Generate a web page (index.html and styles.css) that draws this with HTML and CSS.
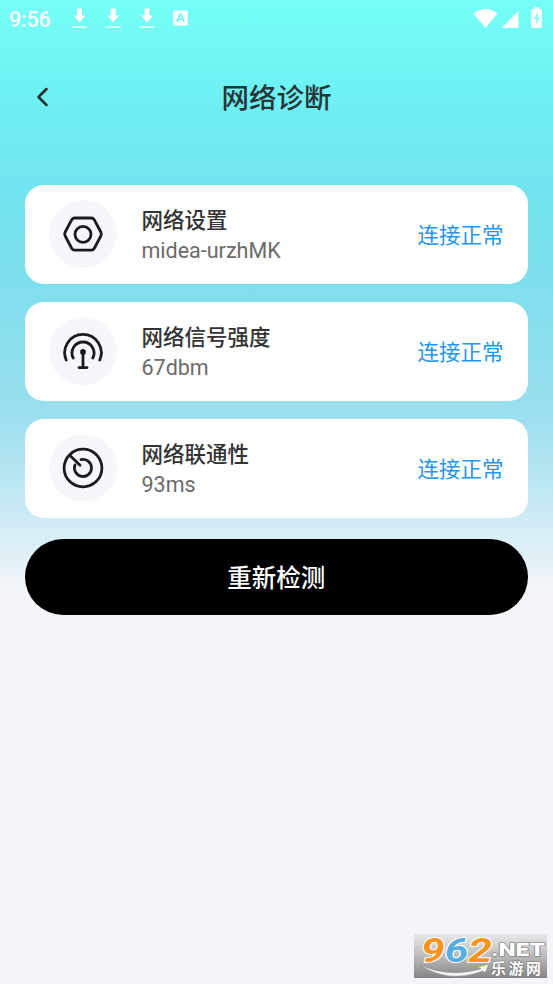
FILE: index.html
```html
<!DOCTYPE html>
<html lang="zh-CN">
<head>
<meta charset="utf-8">
<title>网络诊断</title>
<link rel="stylesheet" href="styles.css">
</head>
<body>
<div class="screen">
  <header class="status">
    <span class="time">9:56</span>
    <svg class="notices" width="120" height="24" viewBox="0 0 120 24" fill="#fff">
      <g id="dl"><path d="M7 1.500h5v7h3.500L9.500 15.500 3.500 8.500H7z"/><path opacity=".75" d="M2 19.300h15v1.800H2z"/></g>
      <use href="#dl" x="33.700"/><use href="#dl" x="67.500"/>
      <path fill-rule="evenodd" d="M104.500 3.500h12q1.200 0 1.200 1.200V17.300q0 1.200-1.200 1.200h-12q-1.200 0-1.200-1.200V4.700q0-1.200 1.200-1.200zM109.500 6l-3.500 9h2l.7-2h3.600l.7 2h2l-3.500-9zM110.500 8.300l1.200 3.100h-2.400z"/>
    </svg>
    <svg class="signals" width="73" height="24" viewBox="0 0 73 24" fill="#fff">
      <path d="M.5 7.500Q12.500-1.700 24.500 7.500L12.500 22z"/><path d="M45.500 5v17H28.500z"/>
      <path fill-rule="evenodd" d="M59.500 3h2V1.200h4.500V3h1.300q1.500 0 1.500 1.500v16q0 1.500-1.500 1.500h-7.600q-1.500 0-1.500-1.500v-16Q58.200 3 59.500 3zM65 6l-4 7h2.300v5.500l3.500-7.200h-2.200z"/>
    </svg>
  </header>
  <nav class="nav">
    <svg class="back" width="16" height="22" viewBox="0 0 16 22"><path d="M12.500 3 4.500 11l8 8"/></svg>
    <h1>网络诊断</h1>
  </nav>
  <main>
    <section class="card">
      <div class="icon"><svg viewBox="0 0 44 44"><path d="M13.800 6h16.400q2 0 3 1.700l6.600 12.300q1 2 0 4L33.200 36.500q-1 1.700-3 1.700H13.800q-2 0-3-1.700L4.200 24q-1-2 0-4L10.800 7.700q1-1.700 3-1.700z"/><circle cx="22" cy="22.300" r="8"/></svg></div>
      <div class="info"><h2>网络设置</h2><p>midea-urzhMK</p></div>
      <span class="state">连接正常</span>
    </section>
    <section class="card">
      <div class="icon"><svg viewBox="0 0 44 44"><path d="M5.200 31A18.300 18.300 0 1 1 38.800 31M12.200 29A11 11 0 1 1 31.800 29M22 23.500V38.300M18 38.600h8"/><circle cx="22" cy="23" r="2.900" class="dot"/></svg></div>
      <div class="info"><h2>网络信号强度</h2><p>67dbm</p></div>
      <span class="state">连接正常</span>
    </section>
    <section class="card">
      <div class="icon"><svg viewBox="0 0 44 44"><circle cx="22" cy="22" r="18.900"/><path d="M9 9.500 19 19.300M20 13.700A8.500 8.500 0 1 1 14 19"/></svg></div>
      <div class="info"><h2>网络联通性</h2><p>93ms</p></div>
      <span class="state">连接正常</span>
    </section>
    <button class="retry">重新检测</button>
  </main>
  <svg class="mark" width="133" height="44" viewBox="0 0 133 44">
    <defs><linearGradient id="g" x1="0" y1="0" x2="0" y2="1"><stop offset="0" stop-color="#e8e8e8"/><stop offset=".5" stop-color="#bbb"/><stop offset="1" stop-color="#858585"/></linearGradient></defs>
    <rect width="133" height="44" fill="url(#g)"/>
    <path class="swoosh" d="M6 31Q34 44 67 35l-3-2 11-3-4 9-2-2Q34 50 6 31z"/>
    <text class="num" x="7" y="27.500" textLength="71" lengthAdjust="spacingAndGlyphs"><tspan fill="#f79422">9</tspan><tspan fill="#56aee0">6</tspan><tspan fill="#f79422">2</tspan></text>
    <text class="net" x="77" y="21.500" textLength="54" lengthAdjust="spacingAndGlyphs">.NET</text>
    <text class="site" x="77" y="39.500" textLength="50">乐游网</text>
  </svg>
</div>
</body>
</html>
```

FILE: styles.css
```css
* { box-sizing: border-box; }
body { margin: 0; font-family: Roboto, "Noto Sans CJK SC", sans-serif; }
h1, h2, p { margin: 0; }
svg { display: block; }
.screen {
  position: relative;
  height: 984px;
  overflow: hidden;
  background: linear-gradient(#76fff8 0, #6ef1f3 90px, #72e5f0 190px, #80dfee 290px, #9adfef 410px, #bce7f3 485px, #d7eef5 535px, #f4f5f8 592px);
}
.status { height: 38px; padding: 0 10px 0 9px; display: flex; align-items: center; color: #f5ffff; }
.time { width: 42px; font-size: 21.500px; line-height: 24px; padding-top: 2px; font-weight: 500; letter-spacing: -.2px; }
.notices { margin: 0 0 1px 19px; }
.signals { margin: 0 -3px 2px auto; }
.nav { height: 118px; display: grid; grid-template-columns: 1fr auto 1fr; align-items: center; }
.back { margin-left: 34px; fill: none; stroke: #252f31; stroke-width: 2.500; stroke-linecap: round; stroke-linejoin: round; }
h1 { font-size: 27.500px; line-height: 40px; padding-top: 4px; font-weight: 500; color: #263537; }
main { padding: 29px 25px 0 24.500px; display: flex; flex-direction: column; gap: 18.500px; }
.card { height: 98.500px; border-radius: 19px; background: #fff; padding: 0 24.500px; display: flex; align-items: center; }
.icon { width: 68px; height: 68px; border-radius: 50%; background: #f5f7fa; display: grid; place-items: center; }
.icon svg { width: 44px; height: 44px; fill: none; stroke: #1c1c1e; stroke-width: 2.800; stroke-linecap: round; stroke-linejoin: round; }
.icon .dot { fill: #1c1c1e; stroke: none; }
.info { margin-left: 24.500px; padding-top: 2px; flex: 1; }
h2 { font-size: 21.500px; line-height: 30px; font-weight: 500; color: #333; }
.info p { font-size: 21.500px; line-height: 29px; color: #6b6b6b; }
.state { font-size: 21.500px; line-height: 30px; padding-top: 4px; color: #2396ef; }
.retry { height: 76px; margin-top: 3px; border: 0; border-radius: 38px; background: #000; color: #fff; font: 500 24.500px/36px Roboto, "Noto Sans CJK SC", sans-serif; padding: 4px 0 0; }
.mark { position: absolute; left: 414px; top: 934px; overflow: visible; }
.swoosh { fill: #f2f2f2; stroke: #888; stroke-width: .5; }
.num { font: italic 700 33px Roboto, sans-serif; stroke: #fff; stroke-width: 2; paint-order: stroke; }
.net { font: 900 18px Roboto, sans-serif; fill: #fff; stroke: #777; stroke-width: 1.200; paint-order: stroke; }
.site { font: 700 15px Roboto, "Noto Sans CJK SC", sans-serif; fill: #fff; stroke: #777; stroke-width: 1.200; paint-order: stroke; }
```
